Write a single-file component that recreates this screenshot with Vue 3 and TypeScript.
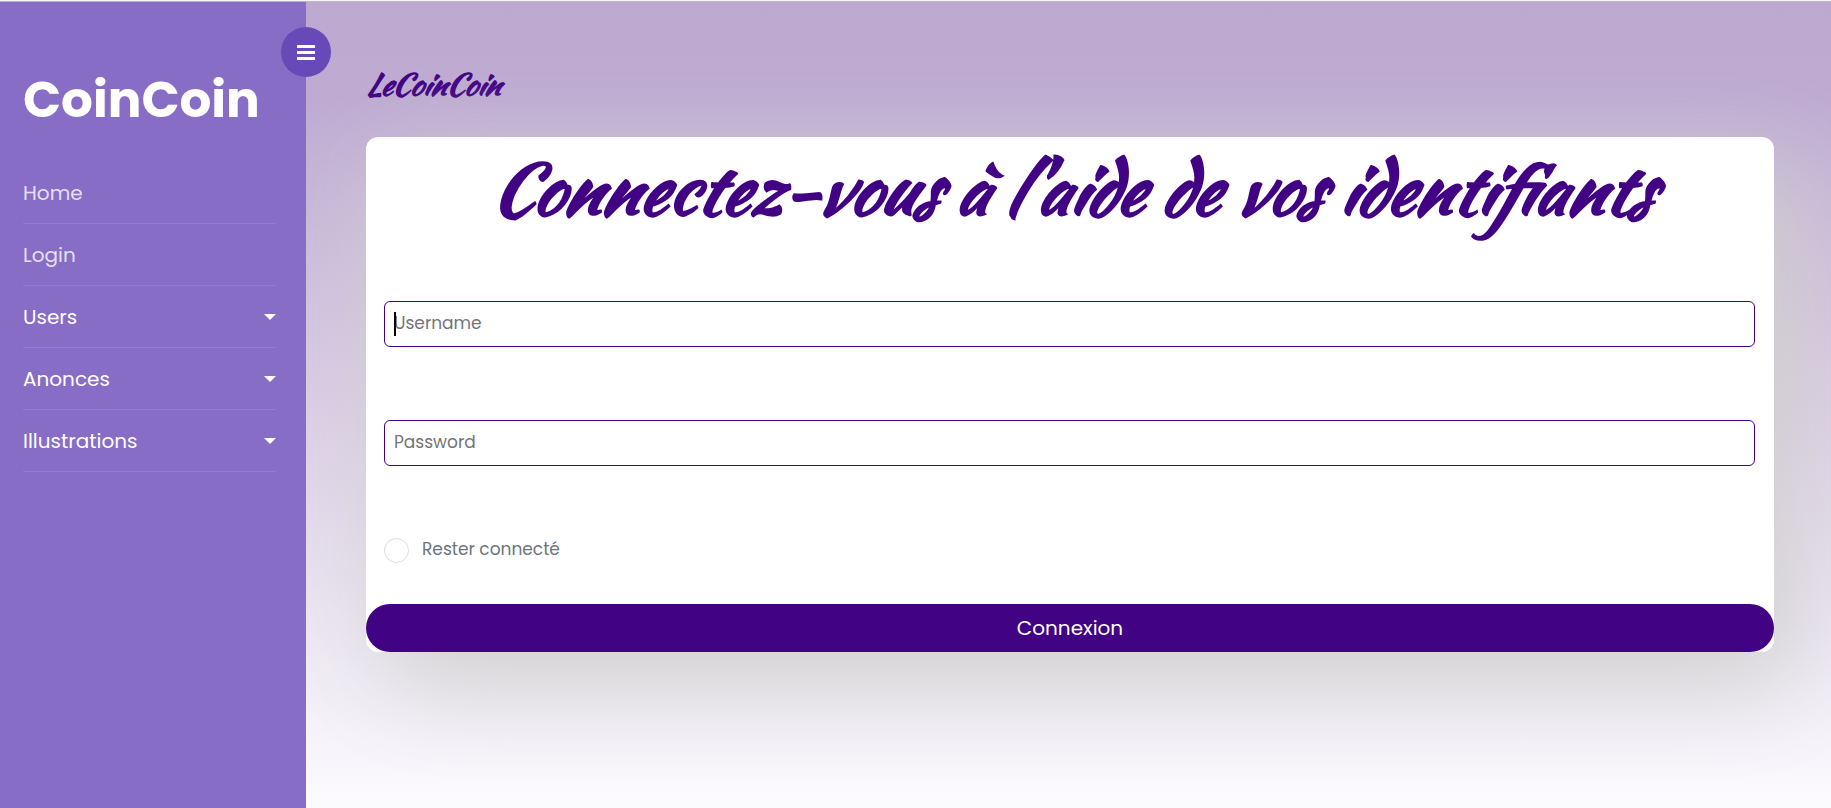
<script setup lang="ts">
import { ref } from 'vue'

interface NavEntry {
  label: string
  dropdown: boolean
}

const entries: NavEntry[] = [
  { label: 'Home', dropdown: false },
  { label: 'Login', dropdown: false },
  { label: 'Users', dropdown: true },
  { label: 'Anonces', dropdown: true },
  { label: 'Illustrations', dropdown: true },
]

const username = ref('')
const password = ref('')
const remember = ref(false)
</script>

<template>
  <div class="page">
    <nav class="sidebar">
      <button class="toggle" type="button" aria-label="Menu">
        <svg viewBox="0 0 18 15" width="18" height="15" aria-hidden="true">
          <path d="M0 0h18v3H0zM0 6h18v3H0zM0 12h18v3H0z" fill="currentColor" />
        </svg>
      </button>
      <h1 class="logo">CoinCoin</h1>
      <ul class="menu">
        <li v-for="entry in entries" :key="entry.label">
          <button v-if="entry.dropdown" class="entry" type="button">
            {{ entry.label }}<span class="caret"></span>
          </button>
          <a v-else class="entry link" href="#">{{ entry.label }}</a>
        </li>
      </ul>
    </nav>

    <main class="content">
      <a class="brand" href="#">LeCoinCoin</a>
      <form class="card" @submit.prevent>
        <h2 class="title">Connectez-vous à l'aide de vos identifiants</h2>
        <div class="fields">
          <div class="field">
            <input v-model="username" type="text" placeholder="Username" aria-label="Username" />
            <span class="cursor" aria-hidden="true"></span>
          </div>
          <div class="field">
            <input v-model="password" type="password" placeholder="Password" aria-label="Password" />
          </div>
          <label class="remember">
            <input v-model="remember" type="checkbox" />
            <span>Rester connecté</span>
          </label>
        </div>
        <button class="submit" type="submit">Connexion</button>
      </form>
    </main>
  </div>
</template>

<style>
body {
  margin: 0;
}
</style>

<style scoped>
.page {
  box-sizing: border-box;
  min-height: 100vh;
  display: grid;
  grid-template-columns: 306px 1fr;
  border-top: 1px solid #f5f6f3;
  font-family: Poppins, Inter, "Open Sans", sans-serif;
  font-size: 16px;
}

.sidebar {
  position: relative;
  z-index: 1;
  padding: 60px 30px 30px 23px;
  border-top: 1px solid #b9b3c3;
  background: #876dc5;
  color: #fff;
}

.toggle {
  position: absolute;
  top: 25px;
  right: -25px;
  width: 50px;
  height: 50px;
  display: flex;
  align-items: center;
  justify-content: center;
  padding: 0;
  border: 0;
  border-radius: 50%;
  background: #6749b8;
  color: #fff;
}

.logo {
  margin: 0 0 24px;
  font-size: 50px;
  font-weight: 700;
  line-height: 76px;
}

.menu {
  margin: 0;
  padding: 0;
  list-style: none;
}

.menu li {
  border-bottom: 1px solid rgba(255, 255, 255, 0.1);
}

.entry {
  width: 100%;
  height: 61px;
  display: flex;
  align-items: center;
  justify-content: space-between;
  padding: 0;
  border: 0;
  background: none;
  color: #fff;
  font: inherit;
  font-size: 20px;
  text-decoration: none;
}

.link {
  color: rgba(255, 255, 255, 0.8);
}

.caret {
  border: 6px solid transparent;
  border-top-color: #fff;
  border-bottom: 0;
}

.content {
  display: flex;
  flex-direction: column;
  align-items: stretch;
  padding: 58px 57px 60px 60px;
  border-top: 1px solid #bdb6c4;
  overflow: hidden;
  background: linear-gradient(#bda8d0, #bfabd2 12%, #fcfbfe);
}

.brand {
  align-self: flex-start;
  margin-bottom: 29px;
  color: #410284;
  font-family: "Kaushan Script", "Liberation Serif", serif;
  font-size: 30px;
  font-style: italic;
  font-weight: 700;
  line-height: 48px;
  text-decoration: none;
}

.card {
  border-radius: 12px;
  background: #fff;
  box-shadow: 20px 30px 100px #d0d0cd;
}

.title {
  margin: 0;
  padding: 10px 0 14px;
  color: #410284;
  font-family: "Kaushan Script", "Liberation Serif", serif;
  font-size: 70px;
  font-style: italic;
  font-weight: 700;
  line-height: 84px;
  text-align: center;
}

.fields {
  padding: 56px 19px 42px 18px;
}

.field {
  position: relative;
  margin-bottom: 73px;
}

.field + .remember {
  margin-top: -1px;
}

.field input {
  box-sizing: border-box;
  display: block;
  width: 100%;
  height: 46px;
  padding: 0 9px 2px;
  border: 1px solid #410284;
  border-radius: 6px;
  outline: 0;
  background: #fff;
  color: #212529;
  font: inherit;
  font-size: 17px;
}

.field input::placeholder {
  color: #757575;
  opacity: 1;
}

.cursor {
  position: absolute;
  top: 11px;
  left: 10px;
  width: 2px;
  height: 24px;
  background: #000;
}

.remember {
  display: flex;
  align-items: center;
  gap: 13px;
  height: 24px;
  color: #6c757d;
  font-size: 17px;
  line-height: 24px;
}

.remember span {
  padding-bottom: 3px;
}

.remember input {
  appearance: none;
  box-sizing: border-box;
  width: 25px;
  height: 25px;
  margin: 0;
  border: 1px solid #dcdcdc;
  border-radius: 50%;
  background: #fff;
}

.remember input:checked {
  background: #410284;
}

.submit {
  display: block;
  width: 100%;
  height: 48px;
  padding: 0;
  border: 0;
  border-radius: 24px;
  background: #410284;
  color: #fff;
  font: inherit;
  font-size: 20px;
}
</style>
